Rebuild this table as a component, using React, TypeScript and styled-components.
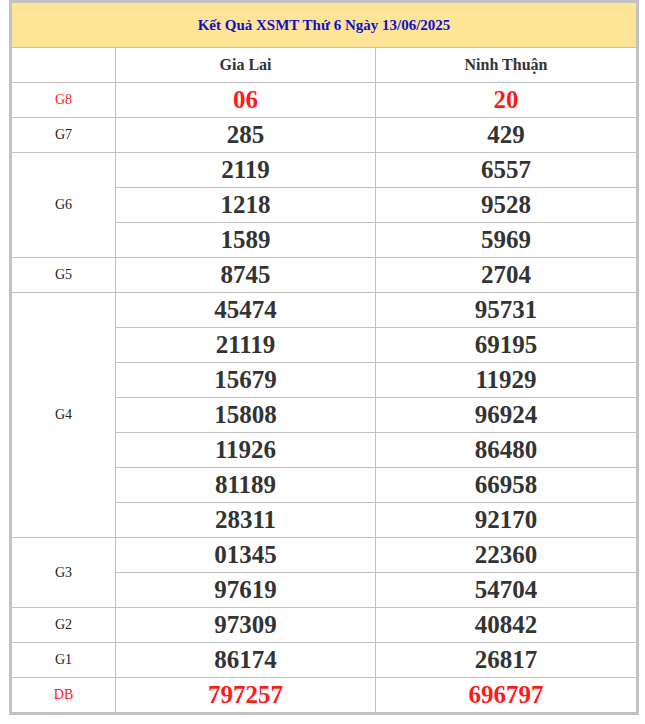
import React from "react";
import styled, { createGlobalStyle } from "styled-components";

const Global = createGlobalStyle`
  html, body { margin: 0; padding: 0; background: #ffffff; }
  body { font-family: "Liberation Serif", "Times New Roman", serif; }
`;

const Page = styled.div`
  padding: 0 6px 0 9px;
`;

const Table = styled.table`
  width: 630px;
  border-collapse: collapse;
  border: 3px solid #c2c2c2;
  table-layout: fixed;
  font-family: "Liberation Serif", "Times New Roman", serif;
`;

const TitleCell = styled.th`
  background: #fee497;
  color: #1010c8;
  font-size: 15px;
  font-weight: bold;
  height: 44px;
  padding: 0;
  text-align: center;
  border-bottom: 1px solid #c2c2c2;
`;

const HeadCell = styled.th`
  height: 34px;
  padding: 0;
  font-size: 16px;
  font-weight: bold;
  color: #333333;
  text-align: center;
  border: 1px solid #c2c2c2;
`;

const LabelCell = styled.td<{ $red?: boolean }>`
  padding: 0;
  font-size: 14px;
  text-align: center;
  color: ${(p) => (p.$red ? "#ff1a1a" : "#222222")};
  border: 1px solid #c2c2c2;
`;

const NumCell = styled.td<{ $red?: boolean }>`
  height: 34px;
  padding: 0;
  font-size: 25px;
  font-weight: bold;
  text-align: center;
  line-height: 34px;
  color: ${(p) => (p.$red ? "#ff1a1a" : "#333333")};
  border: 1px solid #c2c2c2;
`;

type Prize = { label: string; red?: boolean; a: string[]; b: string[] };

const prizes: Prize[] = [
  { label: "G8", red: true, a: ["06"], b: ["20"] },
  { label: "G7", a: ["285"], b: ["429"] },
  { label: "G6", a: ["2119", "1218", "1589"], b: ["6557", "9528", "5969"] },
  { label: "G5", a: ["8745"], b: ["2704"] },
  {
    label: "G4",
    a: ["45474", "21119", "15679", "15808", "11926", "81189", "28311"],
    b: ["95731", "69195", "11929", "96924", "86480", "66958", "92170"],
  },
  { label: "G3", a: ["01345", "97619"], b: ["22360", "54704"] },
  { label: "G2", a: ["97309"], b: ["40842"] },
  { label: "G1", a: ["86174"], b: ["26817"] },
  { label: "DB", red: true, a: ["797257"], b: ["696797"] },
];

export default function App() {
  return (
    <>
      <Global />
      <Page>
        <Table>
          <colgroup>
            <col style={{ width: 105 }} />
            <col style={{ width: 260 }} />
            <col />
          </colgroup>
          <thead>
            <tr>
              <TitleCell colSpan={3}>Kết Quả XSMT Thứ 6 Ngày 13/06/2025</TitleCell>
            </tr>
            <tr>
              <HeadCell></HeadCell>
              <HeadCell>Gia Lai</HeadCell>
              <HeadCell>Ninh Thuận</HeadCell>
            </tr>
          </thead>
          <tbody>
            {prizes.map((p) =>
              p.a.map((num, i) => (
                <tr key={p.label + i}>
                  {i === 0 && (
                    <LabelCell rowSpan={p.a.length} $red={p.red}>
                      {p.label}
                    </LabelCell>
                  )}
                  <NumCell $red={p.red}>{num}</NumCell>
                  <NumCell $red={p.red}>{p.b[i]}</NumCell>
                </tr>
              ))
            )}
          </tbody>
        </Table>
      </Page>
    </>
  );
}
